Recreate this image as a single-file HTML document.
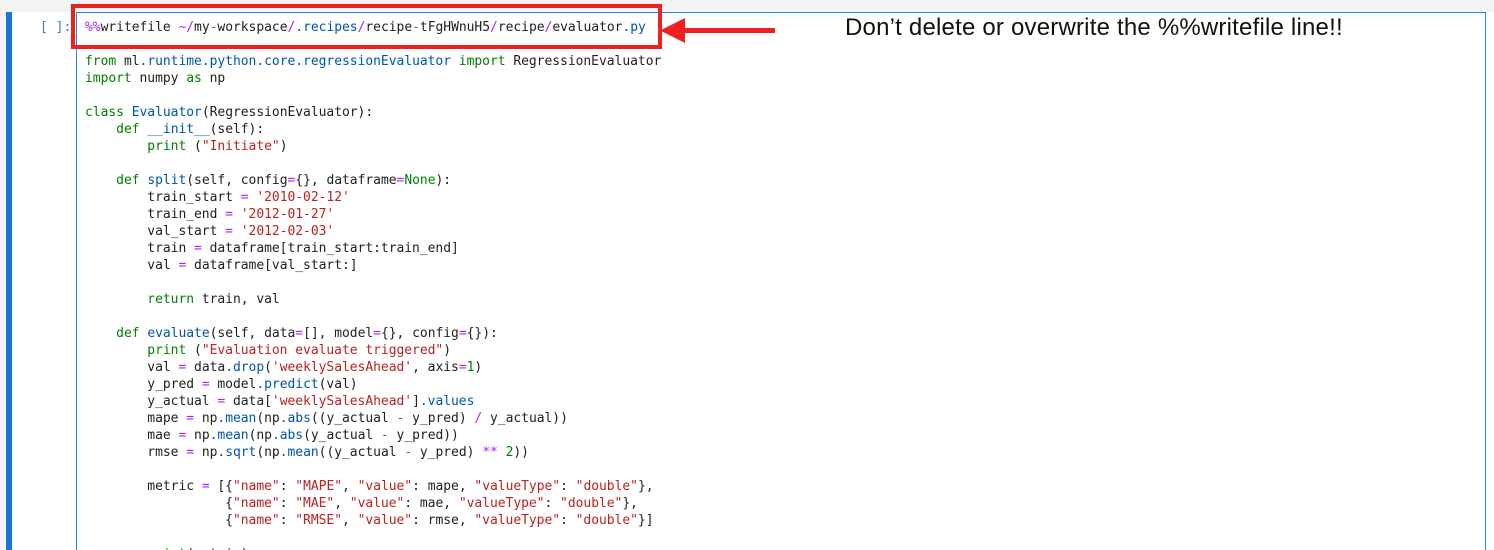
<!DOCTYPE html>
<html style="overflow:hidden"><head><meta charset="utf-8"><style>
html,body{margin:0;width:1494px;height:550px;overflow:hidden}
body{background:#f3f3f3;position:relative;font-family:"DejaVu Sans Mono","Liberation Mono",monospace}
.bar{position:absolute;left:6px;top:12px;width:6px;height:540px;background:#1976d2}
.cellbg{position:absolute;left:12px;top:12px;width:1482px;height:540px;background:#fff}
.inp{position:absolute;left:76px;top:12px;width:1408px;height:545px;border:1px solid #1e88e5;background:#fff}
.prompt{position:absolute;left:40px;top:19px;font-size:13px;color:#307fc1;line-height:17px}
pre{position:absolute;left:85px;top:19px;margin:0;font-size:13px;line-height:17px;color:#212121;font-family:"DejaVu Sans Mono","Liberation Mono",monospace;letter-spacing:-0.04px}
.k{color:#008000}.s{color:#ba2121}.b{color:#0055aa}.o{color:#aa22ff}.n{color:#008000}
.red{position:absolute;left:71px;top:4px;width:583px;height:37px;border:4px solid #f02020}
.note{position:absolute;left:845px;top:14px;font-family:"Liberation Sans",sans-serif;font-size:24px;color:#111;letter-spacing:0.2px}
</style></head><body>
<div class="cellbg"></div>
<div class="bar"></div>
<div class="inp"></div>
<div class="prompt">[ ]:</div>
<pre><span class="o">%%</span>writefile <span class="o">~/</span>my<span class="o">-</span>workspace<span class="o">/</span><span class="b">.recipes</span><span class="o">/</span>recipe<span class="o">-</span>tFgHWnuH5<span class="o">/</span>recipe<span class="o">/</span>evaluator<span class="b">.py</span>

<span class="k">from</span> ml<span class="b">.runtime.python.core.regressionEvaluator</span> <span class="k">import</span> RegressionEvaluator
<span class="k">import</span> numpy <span class="k">as</span> np

<span class="k">class</span> <span class="b">Evaluator</span>(RegressionEvaluator):
    <span class="k">def</span> <span class="b">__init__</span>(self):
        <span class="k">print</span> (<span class="s">"Initiate"</span>)

    <span class="k">def</span> <span class="b">split</span>(self, config<span class="o">=</span>{}, dataframe<span class="o">=</span><span class="k">None</span>):
        train_start <span class="o">=</span> <span class="s">'2010-02-12'</span>
        train_end <span class="o">=</span> <span class="s">'2012-01-27'</span>
        val_start <span class="o">=</span> <span class="s">'2012-02-03'</span>
        train <span class="o">=</span> dataframe[train_start:train_end]
        val <span class="o">=</span> dataframe[val_start:]

        <span class="k">return</span> train, val

    <span class="k">def</span> <span class="b">evaluate</span>(self, data<span class="o">=</span>[], model<span class="o">=</span>{}, config<span class="o">=</span>{}):
        <span class="k">print</span> (<span class="s">"Evaluation evaluate triggered"</span>)
        val <span class="o">=</span> data<span class="b">.drop</span>(<span class="s">'weeklySalesAhead'</span>, axis<span class="o">=</span><span class="n">1</span>)
        y_pred <span class="o">=</span> model<span class="b">.predict</span>(val)
        y_actual <span class="o">=</span> data[<span class="s">'weeklySalesAhead'</span>]<span class="b">.values</span>
        mape <span class="o">=</span> np<span class="b">.mean</span>(np<span class="b">.abs</span>((y_actual <span class="o">-</span> y_pred) <span class="o">/</span> y_actual))
        mae <span class="o">=</span> np<span class="b">.mean</span>(np<span class="b">.abs</span>(y_actual <span class="o">-</span> y_pred))
        rmse <span class="o">=</span> np<span class="b">.sqrt</span>(np<span class="b">.mean</span>((y_actual <span class="o">-</span> y_pred) <span class="o">**</span> <span class="n">2</span>))

        metric <span class="o">=</span> [{<span class="s">"name"</span>: <span class="s">"MAPE"</span>, <span class="s">"value"</span>: mape, <span class="s">"valueType"</span>: <span class="s">"double"</span>},
                  {<span class="s">"name"</span>: <span class="s">"MAE"</span>, <span class="s">"value"</span>: mae, <span class="s">"valueType"</span>: <span class="s">"double"</span>},
                  {<span class="s">"name"</span>: <span class="s">"RMSE"</span>, <span class="s">"value"</span>: rmse, <span class="s">"valueType"</span>: <span class="s">"double"</span>}]

        <span class="k">print</span>(metric)</pre>
<div class="red"></div>
<svg style="position:absolute;left:655px;top:15px" width="125" height="32"><rect x="22" y="13" width="98" height="5" fill="#f02020"/><polygon points="5,15.5 30,3 30,28" fill="#f02020"/></svg>
<div class="note">Don’t delete or overwrite the %%writefile line!!</div>
</body></html>
